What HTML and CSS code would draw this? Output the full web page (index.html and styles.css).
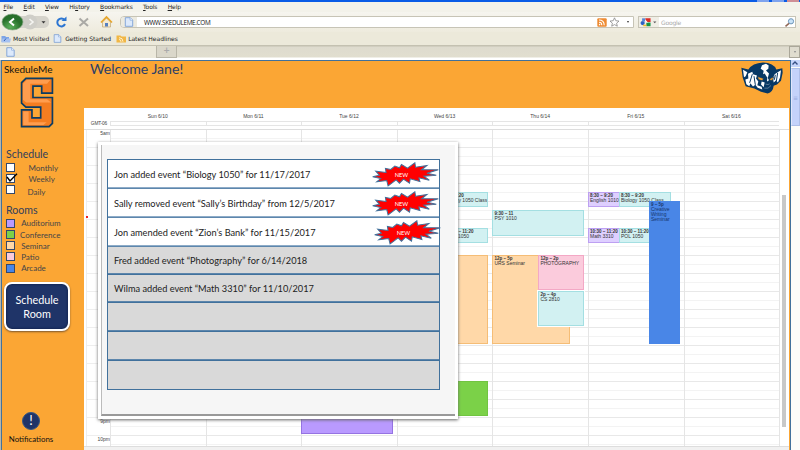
FILE: index.html
```html
<!DOCTYPE html>
<html lang="en">
<head>
<meta charset="utf-8">
<title>SkeduleMe</title>
<link rel="stylesheet" href="styles.css">
</head>
<body>
<svg width="0" height="0" class="defs">
  <symbol id="page" viewBox="0 0 9 10"><path d="M.8.7h5l2.4 2.4v6.2H.8z" fill="#dce9fb" stroke="#6f97d3" stroke-width=".8"/><path d="M5.6.8v2.4h2.5" fill="#fff" stroke="#6f97d3" stroke-width=".6"/></symbol>
  <symbol id="rss" viewBox="0 0 10 9"><rect x=".3" y=".3" width="9.4" height="8.4" rx="1" fill="#ee8b33"/><path d="M2 4.3q2.8 0 2.8 2.9M2 2q5.200 0 5.200 5.200" fill="none" stroke="#fff" stroke-width="1.100"/><circle cx="2.600" cy="6.600" r=".8" fill="#fff"/></symbol>
  <symbol id="burst" viewBox="0 0 200 72"><path d="M2 43 22 38 11 26 42 30 40 18 56 21 68 11 82 16 88 6 106 17 128 1 130 14 164 9 148 22 198 22 164 32 192 38 155 41 171 53 140 46 143 57 114 49 112 62 94 50 82 62 72 52 48 70 44 54 14 58 26 48z" fill="#f00" stroke="#41719c" stroke-width="3"/></symbol>
</svg>
<header class="browser">
  <div class="titlebar"><i></i><i></i><i></i></div>
  <nav class="menus"><span><u>F</u>ile</span><span><u>E</u>dit</span><span><u>V</u>iew</span><span>Hi<u>s</u>tory</span><span><u>B</u>ookmarks</span><span><u>T</u>ools</span><span><u>H</u>elp</span></nav>
  <div class="toolbar">
    <svg class="nav-icons" viewBox="0 0 118 20">
      <defs><radialGradient id="gr" cx=".4" cy=".8"><stop offset="0" stop-color="#5cb15a"/><stop offset="1" stop-color="#28702b"/></radialGradient></defs>
      <rect x="8" y="4" width="41" height="12" rx="5" fill="#d5d3cb"/><circle cx="30" cy="10" r="7.500" fill="#cfcec8"/>
      <ellipse cx="12.500" cy="10" rx="10.500" ry="8" fill="url(#gr)" stroke="#8ba989" stroke-width=".7"/>
      <path d="m14 6.500-4 3.500 4 3.500" fill="none" stroke="#fff" stroke-width="2"/><path d="m29.500 7 3.500 3-3.500 3" fill="none" stroke="#f5f5f2" stroke-width="1.600"/>
      <path d="M41.500 9.200h4l-2 2.300z" fill="#333"/>
      <path d="M64.500 8A4 4 0 1 0 65 12" fill="none" stroke="#2d76d2" stroke-width="2"/><path d="M61.500 9h5V4.500z" fill="#2d76d2"/>
      <path d="m79.500 6.500 8.500 7.500m0-7.500-8.500 7.500" stroke="#aaa9a5" stroke-width="2"/>
      <path d="M102.500 10v5h8v-5l-4-4z" fill="#f6ead0" stroke="#b99b62" stroke-width=".6"/><path d="m101 10.500 5.500-5.500 5.500 5.500" fill="none" stroke="#e7a62d" stroke-width="1.700"/><path d="M105 11h3v3.500h-3z" fill="#567fc0"/>
    </svg>
    <div class="address"><span class="favicon"><svg><use href="#page"/></svg></span><span class="url">WWW.SKEDULEME.COM</span>
      <svg class="rss"><use href="#rss"/></svg>
      <svg class="star" viewBox="0 0 11 10"><path d="m5.500.8 1.300 2.900 3.200.4-2.400 2.100.7 3-2.800-1.600-2.800 1.600.7-3L1 4.100l3.200-.4z" fill="#fff" stroke="#888" stroke-width=".8"/></svg><i class="caret"></i></div>
    <div class="search"><svg class="google" viewBox="0 0 18 9"><circle cx="2.500" cy="5.500" r="2" fill="#2c60c6"/><path d="M2 1h3v3H2z" fill="#5785d5"/><path d="M5 1h5v3.500H6z" fill="#db2c25"/><path d="M6 5h4v3.500H6z" fill="#169447"/><path d="M3 7h3v1.500H3z" fill="#eebc2b"/><path d="m5 3 2 2" stroke="#fff"/><path d="M12.500 4h3L14 5.800z" fill="#555"/></svg><span>Google</span>
      <svg class="lens" viewBox="0 0 11 9"><circle cx="7" cy="3.300" r="2.600" fill="#c8e2f8" stroke="#6f96b9"/><path d="m5 5.400-3.500 3" stroke="#8f6655" stroke-width="1.500"/></svg></div>
  </div>
  <div class="bookmarks">
    <svg class="folder" viewBox="0 0 11 8"><path d="M.5 1h3.700l.8 1h3v5H.5z" fill="#7da4e6"/><path d="M1.500 3.500h8.500L9 7.500H.5z" fill="#a6c1f0"/><path d="m3 6 2-2.500" stroke="#2f62ba"/></svg><span>Most Visited</span>
    <svg class="doc"><use href="#page"/></svg><span class="gs">Getting Started</span>
    <svg class="feed" viewBox="0 0 11 8"><path d="M.5.500h4l1 1h4.500v6H.5z" fill="#f1b745"/><path d="M3 4.500q2 0 2 2.300M3 2.700q4 0 4 4" stroke="#fff0cc" fill="none"/></svg><span>Latest Headlines</span>
  </div>
  <div class="tabs"><div class="tab"><svg><use href="#page"/></svg></div><div class="newtab">+</div><div class="tablist"><i class="caret"></i></div></div>
</header>
<div class="viewport">
  <div class="app">
    <aside class="sidebar">
      <div class="brand">SkeduleMe</div>
      <svg class="s-logo" viewBox="0 0 100 152"><path d="M17 4H96v44H64V27H38v34h58v77l-10 10H4V98h31v24h26V90H17L4 78V17z" fill="#f47d20"/><path d="M20 8h70L80 20H30v46h50l12 10H18L8 68V20zM9 103h16v32h54l-10 8H9z" fill="#ff9d4e"/><path d="M17 4H96v44H64V27H38v34h58v77l-10 10H4V98h31v24h26V90H17L4 78V17z" fill="none" stroke="#0b3c63" stroke-width="5"/></svg>
      <h2>Schedule</h2>
      <div class="views">
        <div><i class="box"></i><span>Monthly</span></div>
        <div><i class="box"><svg viewBox="0 0 12 10"><path d="m1 4 3 4L11 .8" fill="none" stroke="#000" stroke-width="1.400"/></svg></i><span>Weekly</span></div>
        <div><i class="box"></i><span class="daily">Daily</span></div>
      </div>
      <h2 class="rooms-title">Rooms</h2>
      <div class="rooms">
        <div><i class="box auditorium"></i><span>Auditorium</span></div>
        <div><i class="box conference"></i><span class="conf">Conference</span></div>
        <div><i class="box seminar"></i><span>Seminar</span></div>
        <div><i class="box patio"></i><span>Patio</span></div>
        <div><i class="box arcade"></i><span>Arcade</span></div>
      </div>
      <button class="schedule">Schedule<br>Room</button>
      <div class="notify"><b>!</b><span>Notifications</span></div>
    </aside>
    <main>
      <div class="welcome"><h1>Welcome Jane!</h1>
        <svg class="mascot" viewBox="0 0 126 98">
          <path d="M1 17 22 22Q34 3 66 1 98 2 106 22L124 18l1 14-5 24-12 11-10 4Q96 90 80 94L60 89 40 79 14 72 5 46z" fill="#073865"/>
          <path d="m6 23 13 7-5 12-5 3zM21 35l13-6 2 7 12 4-3 9 7 9-3 11 13 5 2 8-14-5-7-9-7 5-8-10-3 9-9-6-3-14 9-3z" fill="#fff"/>
          <path d="m63 9 12-4 8 5-1 10-7 5 9 9-4 14-9-14-5 2 2-10-9-6zM101 36l9-6 10-6-3 22-6 15-6-6-7 6-2-14zM62 58l9 3-3 14-8-8zM79 45l5 9-6 4z" fill="#fff"/>
          <path d="m34 36-8 26M39 42l4 26M110 32l-4 25M103 38l-3 15" stroke="#073865" stroke-width="3"/>
          <path d="m50 43 18 6-4 7-12-4zM86 50l12-6-3 10-8 1z" fill="#f6a333" stroke="#073865" stroke-width="2"/><path d="M70 78q12 4 20-8M74 66q8 3 12-1" fill="none" stroke="#7b96ae" stroke-width="2"/>
        </svg>
      </div>
      <section class="calendar">
        <div class="days"><span></span><span>Sun 6/10</span><span>Mon 6/11</span><span>Tue 6/12</span><span>Wed 6/13</span><span>Thu 6/14</span><span>Fri 6/15</span><span>Sat 6/16</span></div>
        <div class="allday"><span>GMT-06</span><i></i><i></i><i></i><i></i><i></i><i></i><i></i></div>
        <div class="week">
          <div class="times"><span>5am</span><span class="nine">9pm</span><span class="ten">10pm</span></div>
          <div class="day"></div>
          <div class="day"></div>
          <div class="day"><div class="ev purple tue"></div></div>
          <div class="day">
            <div class="ev cyan wed-bio"><p>8:30 – 9:20</p>Biology 1050 Class</div>
            <div class="ev cyan wed-pol"><p>10:30 – 11:20</p>POL 1050</div>
            <div class="ev orange wed-urs"></div><div class="ev green wed-conf"></div>
          </div>
          <div class="day">
            <div class="ev cyan psy"><p>9:30 – 11</p>PSY 1010</div>
            <div class="ev orange urs"><p>12p – 5p</p>URS Seminar</div>
            <div class="ev pink photo"><p>12p – 2p</p>PHOTOGRAPHY</div>
            <div class="ev cyan cs"><p>2p – 4p</p>CS 2810</div>
          </div>
          <div class="day">
            <div class="ev lilac english"><p>8:30 – 9:20</p>English 1010</div>
            <div class="ev cyan bio"><p>8:30 – 9:20</p>Biology 1050 Class</div>
            <div class="ev lilac math"><p>10:30 – 11:20</p>Math 3310</div>
            <div class="ev cyan pol"><p>10:30 – 11:20</p>POL 1050</div>
            <div class="ev blue writing"><p>9 – 5p</p>Creative<br>Writing<br>Seminar</div>
          </div>
          <div class="day"></div>
          <div class="gutter"><i></i></div>
        </div>
        <div class="foot"></div>
        <i class="now"></i>
      </section>
    </main>
    <div class="dialog"><div class="panel"><ul>
      <li class="new"><span>Jon added event “Biology 1050” for 11/17/2017</span><div class="burst"><svg><use href="#burst"/></svg><b>NEW</b></div></li>
      <li class="new"><span>Sally removed event “Sally’s Birthday” from 12/5/2017</span><div class="burst"><svg><use href="#burst"/></svg><b>NEW</b></div></li>
      <li class="new"><span>Jon amended event “Zion’s Bank” for 11/15/2017</span><div class="burst third"><svg><use href="#burst"/></svg><b>NEW</b></div></li>
      <li><span>Fred added event “Photography” for 6/14/2018</span></li>
      <li><span>Wilma added event “Math 3310” for 11/10/2017</span></li>
      <li></li><li></li><li></li>
    </ul></div></div>
  </div>
  <div class="scrollbar"><div class="up"><svg viewBox="0 0 8 6"><path d="m1.500 4.500 2.500-2.500 2.500 2.500" fill="none" stroke="#354e82" stroke-width="1.400"/></svg></div><div class="thumb">≡</div></div>
</div>
</body>
</html>
```
FILE: styles.css
```css
* { box-sizing: border-box; }
body { margin: 0; width: 800px; height: 450px; overflow: hidden; font-family: Lato, "Liberation Sans", sans-serif; background: #fff; }
.defs { display: none; }
svg { display: block; flex: none; }
i { font-style: normal; }

/* Browser frame */
.browser { height: 60px; font: 6px/10px "DejaVu Sans", sans-serif; color: #222; background: #ece9d8; }
.titlebar { height: 2px; background: #0a5ce6; display: flex; justify-content: flex-end; gap: 3px; padding-right: 1px; }
.titlebar i { width: 12px; background: #7ea3ee; }
.titlebar i:last-child { background: #cf8f96; }
.menus { height: 10px; display: flex; gap: 10.300px; padding-left: 3.500px; background: #f3f2ea; letter-spacing: -.1px; }
.menus u { text-underline-offset: .5px; text-decoration-thickness: .5px; }
.toolbar { height: 20px; display: flex; align-items: center; background: linear-gradient(#f6f5ef, #eeebdd); }
.nav-icons { width: 118px; height: 20px; }
.address { margin-left: 2px; width: 514px; height: 12px; border: 1px solid #c7c4b6; border-radius: 4px 0 0 4px; background: #fff; display: flex; align-items: center; }
.favicon { width: 16px; height: 10px; padding: 0 0 0 3px; background: #eceae0; border-radius: 3px 0 0 3px; }
.favicon svg { width: 10px; height: 10px; }
.url { flex: 1; font: 6.400px/10px "Open Sans", sans-serif; letter-spacing: -.35px; padding: 1px 0 0 7px; color: #111; }
.rss { width: 10px; height: 9px; }
.star { width: 11px; height: 10px; margin: 0 7px 0 2px; }
.caret { border: 1.500px solid transparent; border-top: 2px solid #333; border-bottom: 0; margin-right: 4px; }
.search { margin-left: 4px; width: 158px; height: 12px; background: #fff; border: 1px solid #c7c4b6; display: flex; align-items: center; color: #aaa; letter-spacing: -.2px; }
.google { width: 20px; height: 10px; background: #f0eee6; padding-left: 1px; }
.search span { flex: 1; padding: 1px 0 0 2px; }
.lens { width: 11px; height: 9px; }
.bookmarks { height: 13px; display: flex; align-items: center; background: #ece9da; letter-spacing: -.03px; }
.folder { width: 11px; height: 8px; margin: 0 1px; }
.bookmarks .doc { width: 9px; height: 9px; margin: 0 3px 0 4px; }
.bookmarks .gs { margin-right: 1px; }
.feed { width: 11px; height: 8px; margin: 0 1px 0 4px; }
.tabs { height: 15px; display: flex; background: linear-gradient(#c4c1b1 0 1px, #dedbce 2px, #e1decf 12px, #fff 13px); }
.tab { width: 157px; height: 12px; margin-top: 1px; padding: 1px 0 0 6px; background: #ece9db; border-right: 1px solid #b9b6a8; }
.tab svg { width: 9px; height: 10px; }
.newtab { width: 20px; height: 12px; margin-top: 1px; text-align: center; font-size: 8px; font-weight: bold; color: #aaa; background: #dad7ca; border: 1px solid #b9b6a8; border-width: 0 1px 1px 0; }
.tablist { margin-left: auto; width: 11px; height: 12px; margin-top: 1px; border: 1px solid #aaa799; display: flex; align-items: center; padding-left: 4px; }
.tablist .caret { border-top-color: #888; }

/* Application shell */
.viewport { display: flex; height: 390px; padding-left: 1px; background: #b8b5a9; }
.app { position: relative; width: 790px; border: 1px solid #41719c; border-bottom: 0; display: flex; background: #fba634; }
.scrollbar { width: 9px; background: #fcfcf8; }
.up { height: 7px; background: #c5d5fb; }
.up svg { width: 8px; height: 6px; }
.thumb { height: 58px; margin-top: 1px; border: 1px solid #aebfe8; border-left-color: #e0e8fd; background: #c4d3fa; color: #94aade; font: 6px/57px "DejaVu Sans", sans-serif; text-align: center; }

.sidebar { width: 82px; height: 389px; color: #454547; display: flex; flex-direction: column; }
.brand { font-size: 10px; line-height: 12px; color: #111; padding: 2px 0 0 2px; white-space: nowrap; }
.s-logo { width: 34px; height: 51px; margin: 2px 0 0 18px; }
h2 { margin: 20px 0 0 4px; font-size: 10.600px; line-height: 13px; font-weight: 400; color: #32405b; }
.views { display: flex; flex-direction: column; gap: 1.200px; margin: 2px 0 0 4px; }
.views div { height: 10px; display: flex; font-size: 8px; line-height: 10px; }
.box { width: 9px; height: 9px; background: #fff; border: 1px solid #34486b; flex: none; }
.views span { padding-left: 13.500px; }
.views .daily { padding-left: 12.500px; line-height: 15px; }
.box svg { width: 12px; height: 10px; margin: -2px 0 0 -1px; }
.rooms-title { margin-top: 9px; }
.rooms { display: flex; flex-direction: column; gap: 1.200px; margin: 1px 0 0 4px; }
.rooms div { height: 10px; display: flex; align-items: center; font-size: 8px; line-height: 10px; }
.rooms span { padding: 0 0 0 6.200px; }
.rooms .conf { padding-left: 5px; }
.auditorium { background: #b99aff; } .conference { background: #7bd148; } .seminar { background: #ffd8a8; } .patio { background: #fbcbdc; } .arcade { background: #4986e7; }
.schedule { width: 66px; height: 49px; margin: 9px 0 0 2px; padding: 1px 0 0; border: 2px solid #fff; border-radius: 8px; background: #1f3468; color: #fff; font: 10.800px/14px Lato, sans-serif; box-shadow: 0 1px 2px #7b5730, inset 0 0 3px #0b1c42; flex: none; }
.notify { margin: auto 0 6px; width: 58px; display: flex; flex-direction: column; align-items: center; color: #111; font-size: 7.900px; line-height: 10px; }
.notify b { width: 18px; height: 18px; border-radius: 50%; background: #1f3468; border: 1px solid #355682; color: #fff; font: 13px/15px Lato, sans-serif; text-align: center; margin-bottom: 4px; }

main { width: 705px; height: 389px; }
.welcome { height: 47px; display: flex; justify-content: space-between; }
h1 { margin: 0 0 0 6px; font-size: 14.100px; line-height: 16px; font-weight: 400; color: #2c3f68; white-space: nowrap; }
.mascot { width: 42px; height: 33px; margin: 1px 6px 0 0; }

/* Calendar */
.calendar { position: relative; height: 342px; background: #fff; font-family: "Liberation Sans", sans-serif; font-size: 5px; color: #444; overflow: hidden; }
.days, .allday, .week { display: grid; grid-template-columns: 26px repeat(7, 95.600px) 10px; }
.days { height: 13px; line-height: 17px; text-align: center; }
.allday { height: 8px; }
.allday span { font-size: 4.800px; line-height: 5px; text-align: right; padding-right: 3px; letter-spacing: -.2px; }
.allday i { height: 5px; border: 1px solid #e5e5e5; border-right: 0; }
.week { height: 317px; overflow: hidden; border-top: 1px solid #ddd; }
.times { margin-left: 2px; border-left: 1px solid #eee; background: repeating-linear-gradient(transparent 0 17px, #eee 17px 18px); text-align: right; line-height: 6px; display: grid; grid-template-rows: 288px 18px 18px; }
.day { min-width: 0; display: grid; grid-template-columns: minmax(0, 1fr); grid-template-rows: repeat(36, 9px); border-left: 1px solid #e5e5e5; background: repeating-linear-gradient(transparent 0 8px, #f3f3f3 8px 9px, transparent 9px 17px, #e8e8e8 17px 18px); }
.gutter { border-left: 1px solid #e5e5e5; padding: 65px 0 0 2px; }
.gutter i { display: block; width: 4px; height: 232px; background: #c8c8c8; }
.ev { grid-column: 1; margin: -1px 4px 2px -1px; border: 1px solid; line-height: 5px; overflow: hidden; white-space: nowrap; color: #333; padding: 0 1px; }
.ev p { margin: 0; font-size: 4.500px; line-height: 5px; font-weight: bold; }
.cyan { background: #d2f1f2; border-color: #a4dfe2; }
.lilac { background: #decfff; border-color: #bda0f2; }
.purple { background: #b99aff; border-color: #9573e2; }
.orange { background: #ffd8a8; border-color: #f5bd76; }
.pink { background: #fbcbdc; border-color: #f3a8c5; }
.green { background: #7bd148; border-color: #71c441; }
.blue { background: #4986e7; border-color: #4986e7; color: #17366d; }
.tue { grid-row: 29 / 35; }
.wed-bio { grid-row: 8 / 10; padding-left: 47px; margin-bottom: 4px; direction: rtl; padding-right: 0; }
.wed-bio p { direction: ltr; text-indent: -4px; }
.wed-pol { grid-row: 12 / 14; padding-left: 49px; margin-bottom: 4px; }
.wed-pol p { text-indent: -1px; }
.wed-urs { grid-row: 15 / 25; } .wed-conf { grid-row: 29 / 33; }
.psy { grid-row: 10 / 13; }
.urs { grid-row: 15 / 25; margin-right: 18px; }
.photo { grid-row: 15 / 19; margin-left: 45px; }
.cs { grid-row: 19 / 23; margin-left: 45px; box-shadow: 0 0 0 1px #fff; }
.english { grid-row: 8 / 10; margin-right: 64px; margin-bottom: 4px; }
.bio { grid-row: 8 / 10; margin-left: 30px; margin-right: 13px; margin-bottom: 4px; }
.math { grid-row: 12 / 14; margin-right: 64px; margin-bottom: 4px; }
.pol { grid-row: 12 / 14; margin-left: 30px; margin-right: 34px; margin-bottom: 4px; }
.writing { grid-row: 9 / 25; margin-left: 60px; margin-right: 4px; }
.foot { height: 4px; background: #f1f1f1; border-top: 1px solid #ddd; }
.now { position: absolute; left: 2px; top: 108px; width: 1.500px; height: 2px; background: #e22; }

/* Notification dialog lies over the calendar */
.dialog { position: absolute; left: 96px; top: 81px; width: 360px; height: 277px; padding: 3px; background: #fff; box-shadow: 0 1px 3px #666; }
.panel { height: 271px; background: #f6f6f6; border-left: 1px solid #bbb; border-bottom: 2px solid #999; padding: 14px 0 0 5px; }
ul { list-style: none; margin: 0; padding: 0; width: 333px; height: 231px; display: grid; grid-template-rows: 29px 29px 29px 28px 28px 29px 29px 29px; border: 1px solid #41719c; border-top-width: 0; }
li { min-height: 0; background: #d9d9d9; border-top: 1px solid #41719c; padding: 0 0 0 6px; display: flex; align-items: center; justify-content: space-between; font-size: 9.220px; color: #222; white-space: nowrap; }
li.new { background: #fff; }
li.new + li { border-top-color: #5d86ac; box-shadow: 0 -1px #8eacc8; }
li:not(.new) { box-shadow: 0 -1px #5d86ac; }
.burst { display: grid; width: 67px; height: 25px; place-items: center; }
.burst.third { margin-right: -2px; }
.burst > * { grid-area: 1 / 1; }
.burst svg { width: 67px; height: 25px; }
.burst b { font-size: 5.700px; font-weight: 400; color: #fff; padding: 1px 8px 0 0; }
```
